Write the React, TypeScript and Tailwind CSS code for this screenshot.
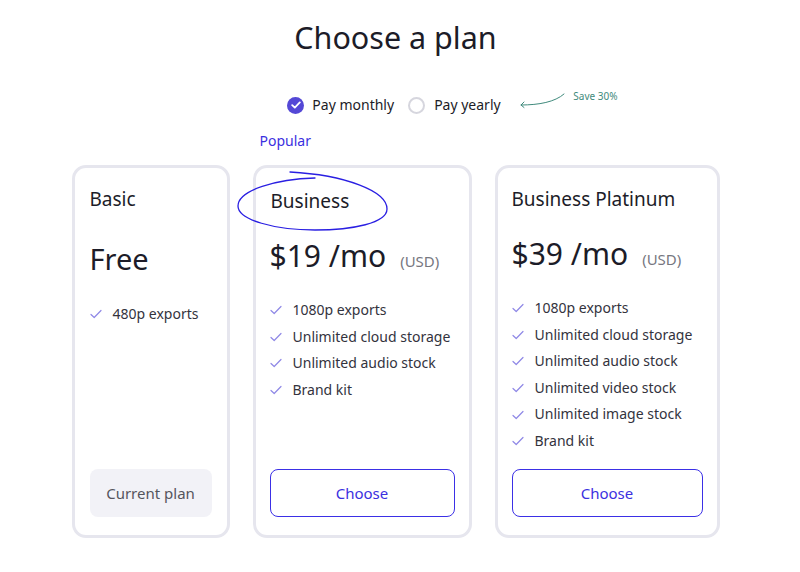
import React from "react";

const font = { fontFamily: '"Noto Sans", "Open Sans", sans-serif' };

function Check() {
  return (
    <svg width="12" height="10" viewBox="0 0 12 10" className="shrink-0">
      <path d="M1 5.5 L4.2 8.5 L11 1.5" fill="none" stroke="#8f88e6" strokeWidth="1.2" strokeLinecap="round" strokeLinejoin="round" />
    </svg>
  );
}

function Features({ items }: { items: string[] }) {
  return (
    <ul className="flex flex-col">
      {items.map((t) => (
        <li key={t} className="flex items-center gap-[11px] text-[14px] leading-[26.6px] text-[#33333d] whitespace-nowrap">
          <Check />
          <span>{t}</span>
        </li>
      ))}
    </ul>
  );
}

function Price({ amount }: { amount: string }) {
  return (
    <div className="flex items-baseline whitespace-nowrap">
      <span className="text-[30px] leading-[36px] text-[#1c1c28]">{amount}</span>
      <span className="ml-[14px] text-[15px] text-[#77777f]">(USD)</span>
    </div>
  );
}

export default function App() {
  return (
    <div className="w-[800px] h-[572px] bg-white pr-[9px] flex flex-col items-center" style={font}>
      <h1 className="mt-[16px] text-[30.5px] leading-[42px] text-[#1c1c28] font-normal">Choose a plan</h1>

      <div className="relative mt-[37px] flex items-center ml-[-3px]">
        <label className="flex items-center gap-[8px]">
          <span className="w-[17px] h-[17px] rounded-full bg-[#5448d6] flex items-center justify-center">
            <svg width="10" height="8" viewBox="0 0 10 8">
              <path d="M1.2 4.2 L3.8 6.6 L8.8 1.4" fill="none" stroke="white" strokeWidth="1.8" strokeLinecap="round" strokeLinejoin="round" />
            </svg>
          </span>
          <span className="text-[14px] leading-[20px] text-[#1c1c28]">Pay monthly</span>
        </label>
        <label className="flex items-center gap-[9px] ml-[14px]">
          <span className="w-[17px] h-[17px] rounded-full border-2 border-[#d6d6de]" />
          <span className="text-[14px] leading-[20px] text-[#1c1c28]">Pay yearly</span>
        </label>
        <div className="absolute left-[232px] top-[-6px] flex items-start">
          <svg width="48" height="18" viewBox="0 0 48 18" className="mt-[3px]">
            <path d="M45 2 C 36 10, 20 13, 2 13" fill="none" stroke="#3f8a7c" strokeWidth="1" strokeLinecap="round" />
            <path d="M5 10 L2 13 L5 15.5" fill="none" stroke="#3f8a7c" strokeWidth="1" strokeLinecap="round" strokeLinejoin="round" />
          </svg>
          <span className="ml-[6px] text-[10px] leading-[14px] text-[#3f8a7c] whitespace-nowrap">Save 30%</span>
        </div>
      </div>

      <div className="mt-[50px] flex gap-[23px] items-stretch">
        {/* Basic */}
        <div className="w-[158px] h-[373px] border-[3px] border-[#e6e6ee] rounded-[14px] pt-[17px] px-[15px] pb-[18px] flex flex-col">
          <div className="text-[19px] leading-[28px] text-[#1c1c28]">Basic</div>
          <div className="mt-[28px] text-[29px] leading-[36px] text-[#1c1c28]">Free</div>
          <div className="mt-[24px]">
            <Features items={["480p exports"]} />
          </div>
          <button className="mt-auto h-[48px] w-full rounded-[8px] bg-[#f2f2f7] text-[15px] text-[#55555d]">Current plan</button>
        </div>

        {/* Business */}
        <div className="relative w-[219px] h-[373px] border-[3px] border-[#e6e6ee] rounded-[14px] pt-[19px] px-[14px] pb-[18px] flex flex-col">
          <div className="absolute left-[4px] top-[-37px] text-[14px] leading-[20px] text-[#3b30e0]">Popular</div>
          <svg className="absolute left-[-21px] top-[0px] overflow-visible" width="160" height="70" viewBox="0 0 160 70">
            <path
              d="M55 4 C 110 7, 152 23, 152 41 C 152 55, 118 62, 80 62 C 40 62, 3 52, 3 38 C 3 22, 42 11, 80 10"
              fill="none"
              stroke="#2a1fe2"
              strokeWidth="1.3"
              strokeLinecap="round"
            />
          </svg>
          <div className="text-[19px] leading-[28px] text-[#1c1c28] ml-[1px]">Business</div>
          <div className="mt-[23px]">
            <Price amount="$19 /mo" />
          </div>
          <div className="mt-[23px]">
            <Features items={["1080p exports", "Unlimited cloud storage", "Unlimited audio stock", "Brand kit"]} />
          </div>
          <button className="mt-auto h-[48px] w-full rounded-[8px] border-[1.5px] border-[#3b30e6] text-[15px] text-[#3b30e0] bg-white">Choose</button>
        </div>

        {/* Business Platinum */}
        <div className="w-[225px] h-[373px] border-[3px] border-[#e6e6ee] rounded-[14px] pt-[17px] px-[14px] pb-[18px] flex flex-col">
          <div className="text-[19px] leading-[28px] text-[#1c1c28] whitespace-nowrap">Business Platinum</div>
          <div className="mt-[23px]">
            <Price amount="$39 /mo" />
          </div>
          <div className="mt-[23px]">
            <Features
              items={[
                "1080p exports",
                "Unlimited cloud storage",
                "Unlimited audio stock",
                "Unlimited video stock",
                "Unlimited image stock",
                "Brand kit",
              ]}
            />
          </div>
          <button className="mt-auto h-[48px] w-full rounded-[8px] border-[1.5px] border-[#3b30e6] text-[15px] text-[#3b30e0] bg-white">Choose</button>
        </div>
      </div>
    </div>
  );
}
